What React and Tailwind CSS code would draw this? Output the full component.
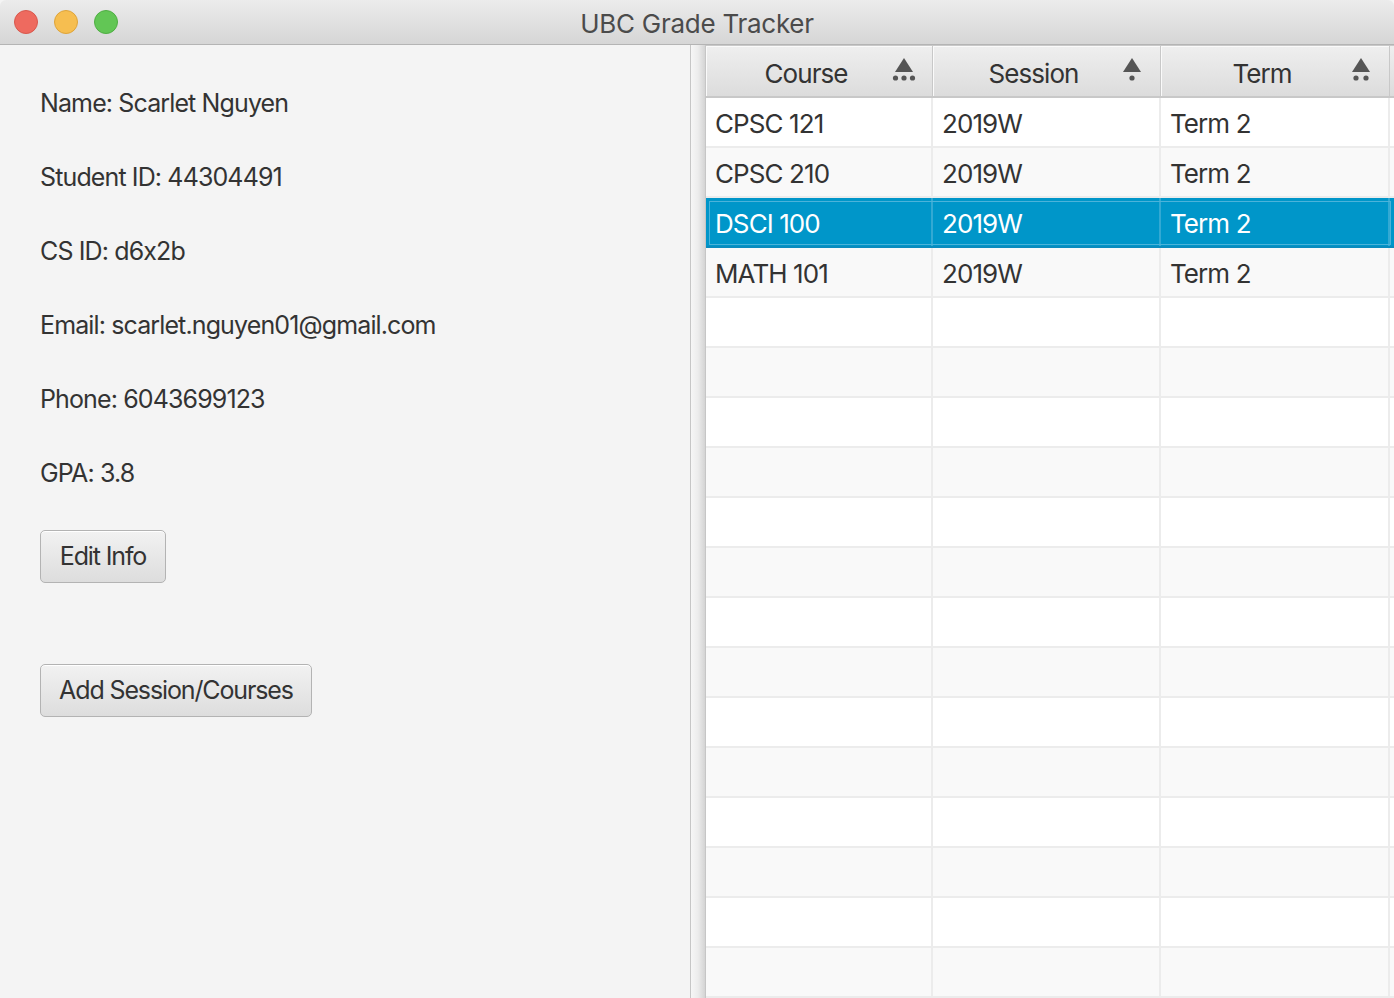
import React from "react";

//Datos de la tabla
const cursos = [
  { curso: "CPSC 121", sesion: "2019W", termino: "Term 2" },
  { curso: "CPSC 210", sesion: "2019W", termino: "Term 2" },
  { curso: "DSCI 100", sesion: "2019W", termino: "Term 2" },
  { curso: "MATH 101", sesion: "2019W", termino: "Term 2" },
];

const datosAlumno = [
  "Name: Scarlet Nguyen",
  "Student ID: 44304491",
  "CS ID: d6x2b",
  "Email: scarlet.nguyen01@gmail.com",
  "Phone: 6043699123",
  "GPA: 3.8",
];

const filasVacias = 14;
const seleccionada = 2;

//Icono de orden (triangulo con puntos de prioridad)
const IconoOrden = ({ puntos }) => (
  <svg width="24" height="26" viewBox="0 0 24 26" className="shrink-0">
    <polygon points="12,1 21,15 3,15" fill="#555555" />
    {puntos === 1 && <circle cx="12" cy="21" r="2.6" fill="#555555" />}
    {puntos === 2 && (
      <>
        <circle cx="7" cy="21" r="2.6" fill="#555555" />
        <circle cx="17" cy="21" r="2.6" fill="#555555" />
      </>
    )}
    {puntos === 3 && (
      <>
        <circle cx="3.5" cy="21" r="2.6" fill="#555555" />
        <circle cx="12" cy="21" r="2.6" fill="#555555" />
        <circle cx="20.5" cy="21" r="2.6" fill="#555555" />
      </>
    )}
  </svg>
);

const Encabezado = ({ texto, puntos, ancho }) => (
  <div
    className={`${ancho} h-full flex items-center border-r border-[#c8c8c8] bg-gradient-to-b from-[#efefef] to-[#dcdcdc] shadow-[inset_1px_1px_0_#fafafa]`}
  >
    <span className="flex-1 text-center pl-[14px] pt-[4px]">{texto}</span>
    <span className="pr-[16px] pb-[2px]">
      <IconoOrden puntos={puntos} />
    </span>
  </div>
);

const Boton = ({ texto, ancho }) => (
  <button
    className={`${ancho} h-[53px] rounded-[5px] border-[1.5px] border-[#b3b3b3] bg-gradient-to-b from-[#f2f2f2] to-[#dddddd] shadow-[inset_0_1px_0_#ffffff] text-[25px] tracking-[-0.045em] text-[#333333] text-center`}
  >
    {texto}
  </button>
);

export default function App() {
  return (
    <div className="w-[1394px] h-[998px] flex flex-col overflow-hidden bg-[#f4f4f4] font-['Inter','Liberation_Sans',sans-serif] text-[#333333]">
      {/*Barra de titulo */}
      <div className="relative h-[45px] shrink-0 flex items-center justify-center rounded-t-[6px] bg-gradient-to-b from-[#ececec] to-[#d6d6d6] border-b border-[#b4b4b4]">
        <div className="absolute left-[14px] top-[10px] flex gap-[16px]">
          <span className="w-[24px] h-[24px] rounded-full bg-[#ee6a5f] border border-[#d8584d]" />
          <span className="w-[24px] h-[24px] rounded-full bg-[#f6be50] border border-[#dea43a]" />
          <span className="w-[24px] h-[24px] rounded-full bg-[#62c655] border border-[#4fae43]" />
        </div>
        <span className="pt-[2px] text-[26px] tracking-[-0.01em] text-[#4b4b4b]">UBC Grade Tracker</span>
      </div>

      <div className="flex flex-1 min-h-0">
        {/*Panel izquierdo con datos del alumno */}
        <div className="w-[690px] shrink-0 flex flex-col pl-[40px] pt-[22px]">
          {datosAlumno.map((linea) => (
            <div key={linea} className="h-[74px] flex items-center text-[25px] tracking-[-0.035em]">
              {linea}
            </div>
          ))}
          <div className="mt-[19px]">
            <Boton texto="Edit Info" ancho="w-[126px]" />
          </div>
          <div className="mt-[81px]">
            <Boton texto="Add Session/Courses" ancho="w-[272px]" />
          </div>
        </div>

        {/*Divisor */}
        <div className="w-[16px] shrink-0 border-l-[1.5px] border-r border-[#c6c6c6] bg-gradient-to-r from-[#f6f6f6] via-[#ececec] to-[#d4d4d4]" />

        {/*Tabla */}
        <div className="flex-1 flex flex-col bg-white text-[26px] tracking-[-0.035em]">
          <div className="h-[53px] shrink-0 flex border-b-2 border-[#c8c8c8] border-t border-t-[#c8c8c8]">
            <Encabezado texto="Course" puntos={3} ancho="w-[227px]" />
            <Encabezado texto="Session" puntos={1} ancho="w-[228px]" />
            <Encabezado texto="Term" puntos={2} ancho="w-[229px]" />
            <div className="flex-1 bg-gradient-to-b from-[#efefef] to-[#dcdcdc]" />
          </div>
          {cursos.map((c, i) => {
            const sel = i === seleccionada;
            return (
              <div
                key={c.curso}
                className={`h-[50px] shrink-0 flex border-b-2 ${
                  sel
                    ? "bg-[#0096c9] text-white border-[#0a8bbd] outline outline-1 -outline-offset-[4px] outline-[#4cb3da]"
                    : i % 2 === 0
                    ? "bg-white border-[#ececec]"
                    : "bg-[#f9f9f9] border-[#ececec]"
                }`}
              >
                <div className={`w-[227px] flex items-center pl-[9px] pt-[2px] border-r-2 ${sel ? "border-[#33a9d3]" : "border-[#ececec]"}`}>
                  {c.curso}
                </div>
                <div className={`w-[228px] flex items-center pl-[9px] pt-[2px] border-r-2 ${sel ? "border-[#33a9d3]" : "border-[#ececec]"}`}>
                  {c.sesion}
                </div>
                <div className={`w-[229px] flex items-center pl-[9px] pt-[2px] border-r-2 ${sel ? "border-[#33a9d3]" : "border-[#ececec]"}`}>
                  {c.termino}
                </div>
                <div className="flex-1" />
              </div>
            );
          })}
          {Array.from({ length: filasVacias }).map((_, j) => (
            <div
              key={j}
              className={`h-[50px] shrink-0 flex border-b-2 border-[#ececec] ${
                (j + cursos.length) % 2 === 0 ? "bg-white" : "bg-[#f9f9f9]"
              }`}
            >
              <div className="w-[227px] border-r-2 border-[#ececec]" />
              <div className="w-[228px] border-r-2 border-[#ececec]" />
              <div className="w-[229px] border-r-2 border-[#ececec]" />
              <div className="flex-1" />
            </div>
          ))}
        </div>
      </div>
    </div>
  );
}
